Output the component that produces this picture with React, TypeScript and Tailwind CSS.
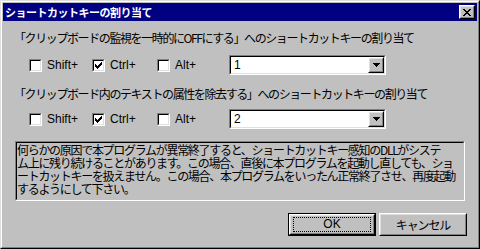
import React from 'react'

const jpBase = "font-['Noto_Sans_CJK_JP',sans-serif] text-[12px] leading-[13px] text-black"
const jp = `${jpBase} tracking-[-1.1px]`
const latin = "font-['Liberation_Sans',Arial,sans-serif] text-[12px] leading-[13px] text-black"

function Raised({ className = '', children }: { className?: string; children?: React.ReactNode }) {
  return (
    <div className={`border border-t-white border-l-white border-r-black border-b-black ${className}`}>
      <div className="w-full h-full border border-t-[#dfdfdf] border-l-[#dfdfdf] border-r-[#808080] border-b-[#808080] bg-[#c0c0c0] flex items-center justify-center">
        {children}
      </div>
    </div>
  )
}

function Sunken({ className = '', children }: { className?: string; children?: React.ReactNode }) {
  return (
    <div className={`border border-t-[#808080] border-l-[#808080] border-r-white border-b-white ${className}`}>
      <div className="w-full h-full border border-t-black border-l-black border-r-[#dfdfdf] border-b-[#dfdfdf]">
        {children}
      </div>
    </div>
  )
}

function Check({ label, checked, width }: { label: string; checked?: boolean; width: string }) {
  return (
    <div className={`flex items-center ${width}`}>
      <Sunken className="w-[13px] h-[13px] shrink-0">
        <div className="w-full h-full bg-white flex items-center justify-center">
          {checked && (
            <svg width="7" height="7" viewBox="0 0 7 7" shapeRendering="crispEdges">
              <path d="M0 2h1v3h-1zM1 3h1v3h-1zM2 4h1v3h-1zM3 3h1v3h-1zM4 2h1v3h-1zM5 1h1v3h-1zM6 0h1v3h-1z" fill="black" />
            </svg>
          )}
        </div>
      </Sunken>
      <span className={`${latin} ml-[5px]`}>{label}</span>
    </div>
  )
}

function Combo({ value }: { value: string }) {
  return (
    <Sunken className="w-[157px] h-[20px]">
      <div className="w-full h-full bg-white flex items-center">
        <span className={`${latin} pl-[3px] flex-1`}>{value}</span>
        <Raised className="w-[16px] h-[16px]">
          <svg width="7" height="4" viewBox="0 0 7 4" shapeRendering="crispEdges">
            <path d="M0 0h7v1h-7zM1 1h5v1h-5zM2 2h3v1h-3zM3 3h1v1h-1z" fill="black" />
          </svg>
        </Raised>
      </div>
    </Sunken>
  )
}

function KeyRow({ value }: { value: string }) {
  return (
    <div className="flex items-center h-[20px] ml-[15px]">
      <Check label="Shift+" width="w-[63px]" />
      <Check label="Ctrl+" checked width="w-[65px]" />
      <Check label="Alt+" width="w-[72px]" />
      <Combo value={value} />
    </div>
  )
}

const notice = [
  '何らかの原因で本プログラムが異常終了すると、ショートカットキー感知のDLLがシステ',
  'ム上に残り続けることがあります。この場合、直後に本プログラムを起動し直しても、ショ',
  'ートカットキーを扱えません。この場合、本プログラムをいったん正常終了させ、再度起動',
  'するようにして下さい。',
]

export default function App() {
  return (
    <div className="w-[480px] h-[249px] bg-[#c0c0c0] border border-t-[#dfdfdf] border-l-[#dfdfdf] border-r-black border-b-black">
      <div className="h-full border border-t-white border-l-white border-r-[#808080] border-b-[#808080] p-px flex flex-col">
        {/* title bar */}
        <div className="h-[18px] bg-[#000080] flex items-center justify-between pl-[2px] pr-[2px]">
          <span className="font-['Noto_Sans_CJK_JP',sans-serif] text-[11px] leading-[13px] font-bold tracking-[-0.5px] text-white">
            ショートカットキーの割り当て
          </span>
          <Raised className="w-[16px] h-[14px]">
            <svg width="8" height="7" viewBox="0 0 8 7" shapeRendering="crispEdges">
              <path d="M0 0h2v1h-2zM6 0h2v1h-2zM1 1h2v1h-2zM5 1h2v1h-2zM2 2h4v1h-4zM3 3h2v1h-2zM2 4h4v1h-4zM1 5h2v1h-2zM5 5h2v1h-2zM0 6h2v1h-2zM6 6h2v1h-2z" fill="black" />
            </svg>
          </Raised>
        </div>

        <div className="flex flex-col pl-[11px] pr-[10px]">
          <div className={`${jpBase} tracking-[-1.4px] mt-[10px] whitespace-nowrap`}>
            「クリップボードの監視を一時的にOFFにする」へのショートカットキーの割り当て
          </div>
          <div className="mt-[11px]">
            <KeyRow value="1" />
          </div>
          <div className={`${jpBase} tracking-[-1.4px] mt-[12px] whitespace-nowrap`}>
            「クリップボード内のテキストの属性を除去する」へのショートカットキーの割り当て
          </div>
          <div className="mt-[9px]">
            <KeyRow value="2" />
          </div>

          <div className="mt-[12px] ml-px w-[450px] h-[60px] border border-t-[#808080] border-l-[#808080] border-r-white border-b-white">
            <div className="w-full h-full border border-t-black border-l-black border-r-[#c0c0c0] border-b-[#c0c0c0]">
              {notice.map((line) => (
                <div key={line} className={`${jpBase} tracking-[-1.3px] h-[13px] whitespace-nowrap`}>
                  {line}
                </div>
              ))}
            </div>
          </div>

          <div className="mt-[12px] flex justify-end gap-[3px]">
            <div className="w-[88px] h-[23px] border border-black">
              <Raised className="w-full h-full">
                <div className="w-[78px] h-[15px] border border-dotted border-black flex items-center justify-center">
                  <span className={latin}>OK</span>
                </div>
              </Raised>
            </div>
            <Raised className="w-[88px] h-[23px]">
              <span className={jp}>キャンセル</span>
            </Raised>
          </div>
        </div>
      </div>
    </div>
  )
}
